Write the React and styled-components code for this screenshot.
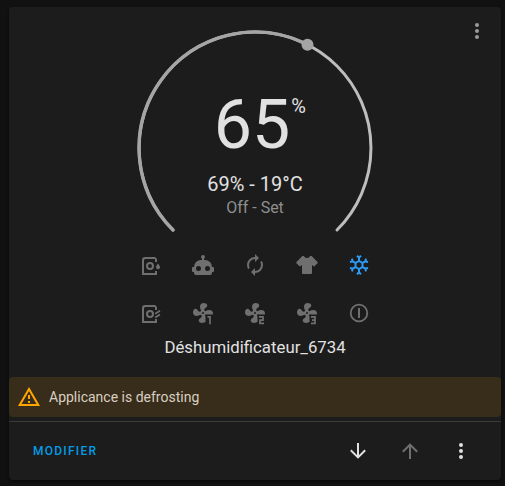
import React from "react";
import styled, { createGlobalStyle } from "styled-components";

const GlobalStyle = createGlobalStyle`
  * { box-sizing: border-box; }
  body {
    margin: 0;
    background: #111111;
    color: #e1e1e1;
    font-family: Roboto, "Noto Sans", sans-serif;
    -webkit-font-smoothing: antialiased;
  }
`;

const Page = styled.main`
  height: 486px;
  padding: 7px 4px 6px 9px;
  overflow: hidden;
`;

const Preview = styled.div`
  display: flex;
  flex-direction: column;
  height: 473px;
  border-radius: 4px;
  background: #1c1c1c;
  box-shadow: 0 2px 3px rgba(0, 0, 0, 0.5);
`;

const CardBody = styled.section`
  position: relative;
  display: flex;
  flex-direction: column;
  align-items: center;
  height: 414px;
`;

const CornerMenu = styled.button`
  position: absolute;
  top: 12px;
  right: 12px;
  display: flex;
  padding: 0;
  border: 0;
  background: none;
  color: #9b9b9b;
`;

const Dial = styled.div`
  position: relative;
  width: 240px;
  height: 226px;
  margin-top: 17px;
`;

const DialArc = styled.svg`
  display: block;
`;

const Readout = styled.div`
  position: absolute;
  inset: 0;
  display: flex;
  flex-direction: column;
  align-items: center;
  padding-top: 61px;
`;

const Target = styled.div`
  position: relative;
  margin-left: -6px;
  font-size: 68px;
  line-height: 80px;
  font-weight: 400;
`;

const Unit = styled.sup`
  position: absolute;
  top: 9px;
  left: 100%;
  margin-left: 1px;
  font-size: 20px;
  line-height: 24px;
`;

const Current = styled.div`
  margin-top: 7px;
  font-size: 20px;
  line-height: 24px;
`;

const State = styled.div`
  margin-top: 2px;
  font-size: 16px;
  line-height: 20px;
  color: #8f8f8f;
`;

const Modes = styled.div`
  display: grid;
  grid-template-columns: repeat(5, 52px);
  grid-template-rows: repeat(2, 48px);
  margin-top: -9px;
`;

const Mode = styled.button`
  display: flex;
  align-items: center;
  justify-content: center;
  padding: 0;
  border: 0;
  background: none;
  color: ${({ $active }) => ($active ? "#2b9af9" : "#6f6f6f")};
`;

const Name = styled.div`
  font-size: 16.8px;
  line-height: 20px;
`;

const Alert = styled.div`
  display: flex;
  align-items: center;
  gap: 8px;
  width: 100%;
  height: 40px;
  margin-top: auto;
  margin-bottom: 4px;
  padding: 0 8px;
  border-radius: 4px;
  background: #382d1b;
  color: #d9cfc0;
  font-size: 14px;
  line-height: 20px;
`;

const AlertIcon = styled.span`
  display: flex;
  color: #ffa600;
`;

const Actions = styled.footer`
  display: flex;
  align-items: center;
  flex: 1;
  padding: 0 28px 0 24px;
  border-top: 1px solid #3a3a3a;
`;

const EditButton = styled.button`
  margin-right: auto;
  padding: 0;
  border: 0;
  background: none;
  color: #039be5;
  font: 500 12px/20px Roboto, sans-serif;
  letter-spacing: 1.25px;
`;

const IconButton = styled.button`
  display: flex;
  margin-left: ${({ $gap }) => $gap || 0}px;
  padding: 0;
  border: 0;
  background: none;
  color: ${({ disabled }) => (disabled ? "#6f6f6f" : "#e1e1e1")};
`;

const Glyph = ({ children, size = 24 }) => (
  <svg width={size} height={size} viewBox="0 0 24 24" fill="currentColor" aria-hidden="true">
    {children}
  </svg>
);

const Dots = () => (
  <Glyph>
    <path d="M12,16A2,2 0 0,1 14,18A2,2 0 0,1 12,20A2,2 0 0,1 10,18A2,2 0 0,1 12,16M12,10A2,2 0 0,1 14,12A2,2 0 0,1 12,14A2,2 0 0,1 10,12A2,2 0 0,1 12,10M12,4A2,2 0 0,1 14,6A2,2 0 0,1 12,8A2,2 0 0,1 10,6A2,2 0 0,1 12,4Z" />
  </Glyph>
);

const Dryer = ({ children }) => (
  <Glyph>
    <path d="M6 4H16L18 6V9H16V6H6L5 7V20H16V18H18V22H3V7Q3 4 6 4Z" />
    <circle cx="11" cy="13" r="3" fill="none" stroke="currentColor" strokeWidth="2" />
    {children}
  </Glyph>
);

const DryerDrop = () => (
  <Dryer>
    <path d="M19 10.5C20 12 21 13 21 14.2A2 2 0 0 1 17 14.2C17 13 18 12 19 10.5Z" />
  </Dryer>
);

const DryerAir = () => (
  <Dryer>
    <path
      d="M16.2 12.7L21 9.8M16.2 16.4L21 13.5"
      fill="none"
      stroke="currentColor"
      strokeWidth="1.7"
    />
  </Dryer>
);

const Robot = () => (
  <Glyph>
    <path
      fillRule="evenodd"
      d="M12 2A2 2 0 0 1 14 4C14 4.74 13.6 5.39 13 5.73V7H14A7 7 0 0 1 21 14H22A1 1 0 0 1 23 15V18A1 1 0 0 1 22 19H21V20A2 2 0 0 1 19 22H5A2 2 0 0 1 3 20V19H2A1 1 0 0 1 1 18V15A1 1 0 0 1 2 14H3A7 7 0 0 1 10 7H11V5.73C10.4 5.39 10 4.74 10 4A2 2 0 0 1 12 2M7.5 13A2.5 2.5 0 0 0 5 15.5A2.5 2.5 0 0 0 7.5 18A2.5 2.5 0 0 0 10 15.5A2.5 2.5 0 0 0 7.5 13M16.5 13A2.5 2.5 0 0 0 14 15.5A2.5 2.5 0 0 0 16.5 18A2.5 2.5 0 0 0 19 15.5A2.5 2.5 0 0 0 16.5 13Z"
    />
  </Glyph>
);

const Renew = () => (
  <Glyph>
    <path d="M12,6V9L16,5L12,1V4A8,8 0 0,0 4,12C4,13.57 4.46,15.03 5.24,16.26L6.7,14.8C6.25,13.97 6,13 6,12A6,6 0 0,1 12,6M18.76,7.74L17.3,9.2C17.74,10.04 18,11 18,12A6,6 0 0,1 12,18V15L8,19L12,23V20A8,8 0 0,0 20,12C20,10.43 19.54,8.97 18.76,7.74Z" />
  </Glyph>
);

const Shirt = () => (
  <Glyph>
    <path d="M16,21H8A1,1 0 0,1 7,20V12.07L5.7,13.07C5.31,13.46 4.68,13.46 4.29,13.07L1.46,10.29C1.07,9.9 1.07,9.27 1.46,8.88L7.34,3H9C9.29,4.1 10.4,5 12,5C13.6,5 14.71,4.1 15,3H16.66L22.54,8.88C22.93,9.27 22.93,9.9 22.54,10.29L19.71,13.12C19.32,13.5 18.69,13.5 18.3,13.12L17,12.12V20A1,1 0 0,1 16,21Z" />
  </Glyph>
);

const Snowflake = () => (
  <Glyph>
    <path
      fillRule="evenodd"
      d="M20.79,13.95L18.46,14.57L16.46,13.44V10.56L18.46,9.43L20.79,10.05L21.31,8.12L19.54,7.65L20,5.88L18.07,5.36L17.45,7.69L15.45,8.82L13,7.38V5.12L14.71,3.41L13.29,2L12,3.29L10.71,2L9.29,3.41L11,5.12V7.38L8.5,8.82L6.5,7.69L5.92,5.36L4,5.88L4.47,7.65L2.7,8.12L3.22,10.05L5.55,9.43L7.55,10.56V13.45L5.55,14.58L3.22,13.96L2.7,15.89L4.47,16.36L4,18.12L5.93,18.64L6.55,16.31L8.55,15.18L11,16.62V18.88L9.29,20.59L10.71,22L12,20.71L13.29,22L14.7,20.59L13,18.88V16.62L15.5,15.17L17.5,16.3L18.12,18.63L20,18.12L19.53,16.35L21.3,15.88L20.79,13.95M9.5,10.56L12,9.11L14.5,10.56V13.44L12,14.89L9.5,13.44V10.56Z"
    />
  </Glyph>
);

const digitStrokes = {
  1: "M16.5 15.9H19V23.2",
  2: "M16 15.9H20V19.1H17V22.3H21",
  3: "M16 15.9H20V22.3H16M17 19.1H20",
};

const FanSpeed = ({ speed }) => (
  <Glyph>
    <path
      fillRule="evenodd"
      d="M12,11A1,1 0 0,0 11,12A1,1 0 0,0 12,13A1,1 0 0,0 13,12A1,1 0 0,0 12,11M12.5,2C17,2 17.11,5.57 14.75,6.75C13.76,7.24 13.32,8.29 13.13,9.22C13.61,9.42 14.03,9.73 14.35,10.13C18.05,8.13 22.03,8.92 22.03,12.5L21.8,13.6H17L15.8,13.4L14.79,13.11C14.59,13.59 14.28,14 13.88,14.34L14.5,15.6V21L11.5,22C7,22 6.91,18.42 9.27,17.24C10.25,16.75 10.69,15.71 10.89,14.79C10.4,14.59 9.97,14.27 9.65,13.87C5.96,15.85 2,15.07 2,11.5C2,7 5.56,6.89 6.74,9.26C7.24,10.25 8.29,10.68 9.22,10.87C9.41,10.39 9.73,9.97 10.14,9.65C8.15,5.96 8.94,2 12.5,2Z"
    />
    <path d={digitStrokes[speed]} fill="none" stroke="currentColor" strokeWidth="1.7" />
  </Glyph>
);

const Power = () => (
  <Glyph>
    <circle cx="12" cy="12" r="8.3" fill="none" stroke="currentColor" strokeWidth="1.8" />
    <path d="M11 7H13V17H11Z" />
  </Glyph>
);

const Warning = () => (
  <Glyph>
    <path
      fillRule="evenodd"
      d="M12,2L1,21H23L12,2M12,6L19.53,19H4.47L12,6M11,10V14H13V10H11M11,16V18H13V16H11"
    />
  </Glyph>
);

const ArrowDown = () => (
  <Glyph>
    <path d="M11,4H13V16L18.5,10.5L19.92,11.92L12,19.84L4.08,11.92L5.5,10.5L11,16V4Z" />
  </Glyph>
);

const ArrowUp = () => (
  <Glyph>
    <path d="M13,20H11V8L5.5,13.5L4.08,12.08L12,4.16L19.92,12.08L18.5,13.5L13,8V20Z" />
  </Glyph>
);

const modes = [
  { label: "Laundry", icon: <DryerDrop /> },
  { label: "Auto", icon: <Robot /> },
  { label: "Continuous", icon: <Renew /> },
  { label: "Clothes", icon: <Shirt /> },
  { label: "Defrost", icon: <Snowflake />, active: true },
  { label: "Air", icon: <DryerAir /> },
  { label: "Fan low", icon: <FanSpeed speed={1} /> },
  { label: "Fan medium", icon: <FanSpeed speed={2} /> },
  { label: "Fan high", icon: <FanSpeed speed={3} /> },
  { label: "Power", icon: <Power /> },
];

export default function App() {
  return (
    <Page>
      <GlobalStyle />
      <Preview>
        <CardBody>
          <CornerMenu aria-label="More">
            <Dots />
          </CornerMenu>
          <Dial>
            <DialArc width="240" height="226" viewBox="0 0 240 226" fill="none">
              <path
                d="M38 206A116 116 0 1 1 202 206"
                stroke="#bdbdbd"
                strokeWidth="3"
                strokeLinecap="round"
              />
              <path
                d="M38 206A116 116 0 0 1 172 20.3"
                stroke="#a5a5a5"
                strokeWidth="3.4"
                strokeLinecap="round"
              />
              <circle cx="172.5" cy="20.7" r="6" fill="#a5a5a5" />
            </DialArc>
            <Readout>
              <Target>
                65<Unit>%</Unit>
              </Target>
              <Current>69% - 19°C</Current>
              <State>Off - Set</State>
            </Readout>
          </Dial>
          <Modes>
            {modes.map(({ label, icon, active }) => (
              <Mode key={label} aria-label={label} $active={active}>
                {icon}
              </Mode>
            ))}
          </Modes>
          <Name>Déshumidificateur_6734</Name>
          <Alert>
            <AlertIcon>
              <Warning />
            </AlertIcon>
            Applicance is defrosting
          </Alert>
        </CardBody>
        <Actions>
          <EditButton>MODIFIER</EditButton>
          <IconButton aria-label="Move down">
            <ArrowDown />
          </IconButton>
          <IconButton aria-label="Move up" disabled $gap={28}>
            <ArrowUp />
          </IconButton>
          <IconButton aria-label="Options" $gap={27}>
            <Dots />
          </IconButton>
        </Actions>
      </Preview>
    </Page>
  );
}
